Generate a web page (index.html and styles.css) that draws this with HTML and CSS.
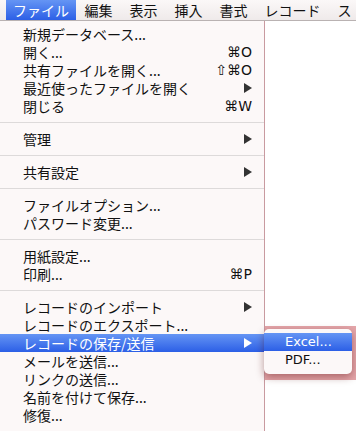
FILE: index.html
```html
<!DOCTYPE html>
<html lang="ja">
<head>
    <meta charset="UTF-8">
    <title>ファイル メニュー</title>
    <link rel="stylesheet" href="styles.css">
</head>
<body>

<div class="screen">
    <!-- Menu bar -->
    <div class="menubar">
        <span class="menubar-item active">ファイル</span>
        <span class="menubar-item">編集</span>
        <span class="menubar-item">表示</span>
        <span class="menubar-item">挿入</span>
        <span class="menubar-item">書式</span>
        <span class="menubar-item">レコード</span>
        <span class="menubar-item">ス</span>
    </div>

    <!-- File menu -->
    <div class="menu">
        <div class="menu-item"><span>新規データベース...</span></div>
        <div class="menu-item"><span>開く...</span><span class="shortcut">⌘O</span></div>
        <div class="menu-item"><span>共有ファイルを開く...</span><span class="shortcut">⇧⌘O</span></div>
        <div class="menu-item"><span>最近使ったファイルを開く</span><svg class="arrow" width="8" height="10" viewBox="0 0 8 10"><polygon points="0,0 8,5 0,10"/></svg></div>
        <div class="menu-item"><span>閉じる</span><span class="shortcut">⌘W</span></div>
        <div class="separator"></div>
        <div class="menu-item"><span>管理</span><svg class="arrow" width="8" height="10" viewBox="0 0 8 10"><polygon points="0,0 8,5 0,10"/></svg></div>
        <div class="separator"></div>
        <div class="menu-item"><span>共有設定</span><svg class="arrow" width="8" height="10" viewBox="0 0 8 10"><polygon points="0,0 8,5 0,10"/></svg></div>
        <div class="separator"></div>
        <div class="menu-item"><span>ファイルオプション...</span></div>
        <div class="menu-item"><span>パスワード変更...</span></div>
        <div class="separator"></div>
        <div class="menu-item"><span>用紙設定...</span></div>
        <div class="menu-item"><span>印刷...</span><span class="shortcut">⌘P</span></div>
        <div class="separator"></div>
        <div class="menu-item"><span>レコードのインポート</span><svg class="arrow" width="8" height="10" viewBox="0 0 8 10"><polygon points="0,0 8,5 0,10"/></svg></div>
        <div class="menu-item"><span>レコードのエクスポート...</span></div>
        <div class="menu-item selected"><span>レコードの保存/送信</span><svg class="arrow" width="8" height="10" viewBox="0 0 8 10"><polygon points="0,0 8,5 0,10"/></svg></div>
        <div class="menu-item"><span>メールを送信...</span></div>
        <div class="menu-item"><span>リンクの送信...</span></div>
        <div class="menu-item"><span>名前を付けて保存...</span></div>
        <div class="menu-item"><span>修復...</span></div>
        <div class="menu-item"><span>&nbsp;</span></div>
    </div>

    <!-- window behind the submenu -->
    <div class="back-window"></div>

    <!-- Save/Send submenu -->
    <div class="submenu">
        <div class="submenu-item selected">Excel...</div>
        <div class="submenu-item">PDF...</div>
    </div>
</div>

</body>
</html>
```

FILE: styles.css
```css
body {
    margin: 0;
    background-color: #fff;
    font-family: "Noto Sans CJK JP", "DejaVu Sans", sans-serif;
}
.screen {
    position: relative;
    width: 356px;
    height: 431px;
    overflow: hidden;
    background-color: #fff;
}
.menubar {
    display: flex;
    height: 21px;
    padding-left: 6px;
    background: linear-gradient(#fbf8f8, #efeaea);
    border-bottom: 1px solid #b9b2b2;
    box-sizing: border-box;
    white-space: nowrap;
}
.menubar-item {
    padding: 0 8.5px;
    font-size: 14px;
    line-height: 20px;
    color: #111;
}
.menubar-item.active {
    padding: 0 7px;
    color: #fff;
    background: linear-gradient(#6595f4, #2c5fe6);
}
.menu {
    width: 264px;
    padding-top: 4px;
    background-color: #fcf8f8;
    border-right: 1px solid #c99aa0;
}
.menu-item {
    display: flex;
    justify-content: space-between;
    align-items: center;
    height: 18px;
    padding: 0 12px 0 23px;
    font-size: 14px;
    line-height: 18px;
    color: #111;
    white-space: nowrap;
}
.menu-item.selected {
    color: #fff;
    background: linear-gradient(#6595f4, #2c5fe6);
}
.shortcut {
    font-family: "DejaVu Sans", sans-serif;
    font-size: 14px;
}
.arrow {
    fill: #333;
}
.selected .arrow {
    fill: #fff;
}
.separator {
    height: 15px;
    display: flex;
    align-items: center;
}
.separator::before {
    content: "";
    flex: 1;
    height: 1px;
    background-color: #dddada;
}
.back-window {
    position: absolute;
    left: 265px;
    top: 326px;
    right: 0;
    height: 54px;
    background-color: #e4a6aa;
}
.submenu {
    position: absolute;
    left: 264px;
    top: 329px;
    width: 88px;
    padding: 4px 0 5px;
    background-color: #fcf8f8;
    border-radius: 5px;
    box-shadow: 0 3px 8px rgba(80, 0, 0, 0.4);
}
.submenu-item {
    height: 18px;
    padding-left: 21px;
    font-family: "DejaVu Sans", sans-serif;
    font-size: 13px;
    line-height: 18px;
    color: #111;
}
.submenu-item.selected {
    color: #fff;
    background: linear-gradient(#6595f4, #2c5fe6);
}
```
